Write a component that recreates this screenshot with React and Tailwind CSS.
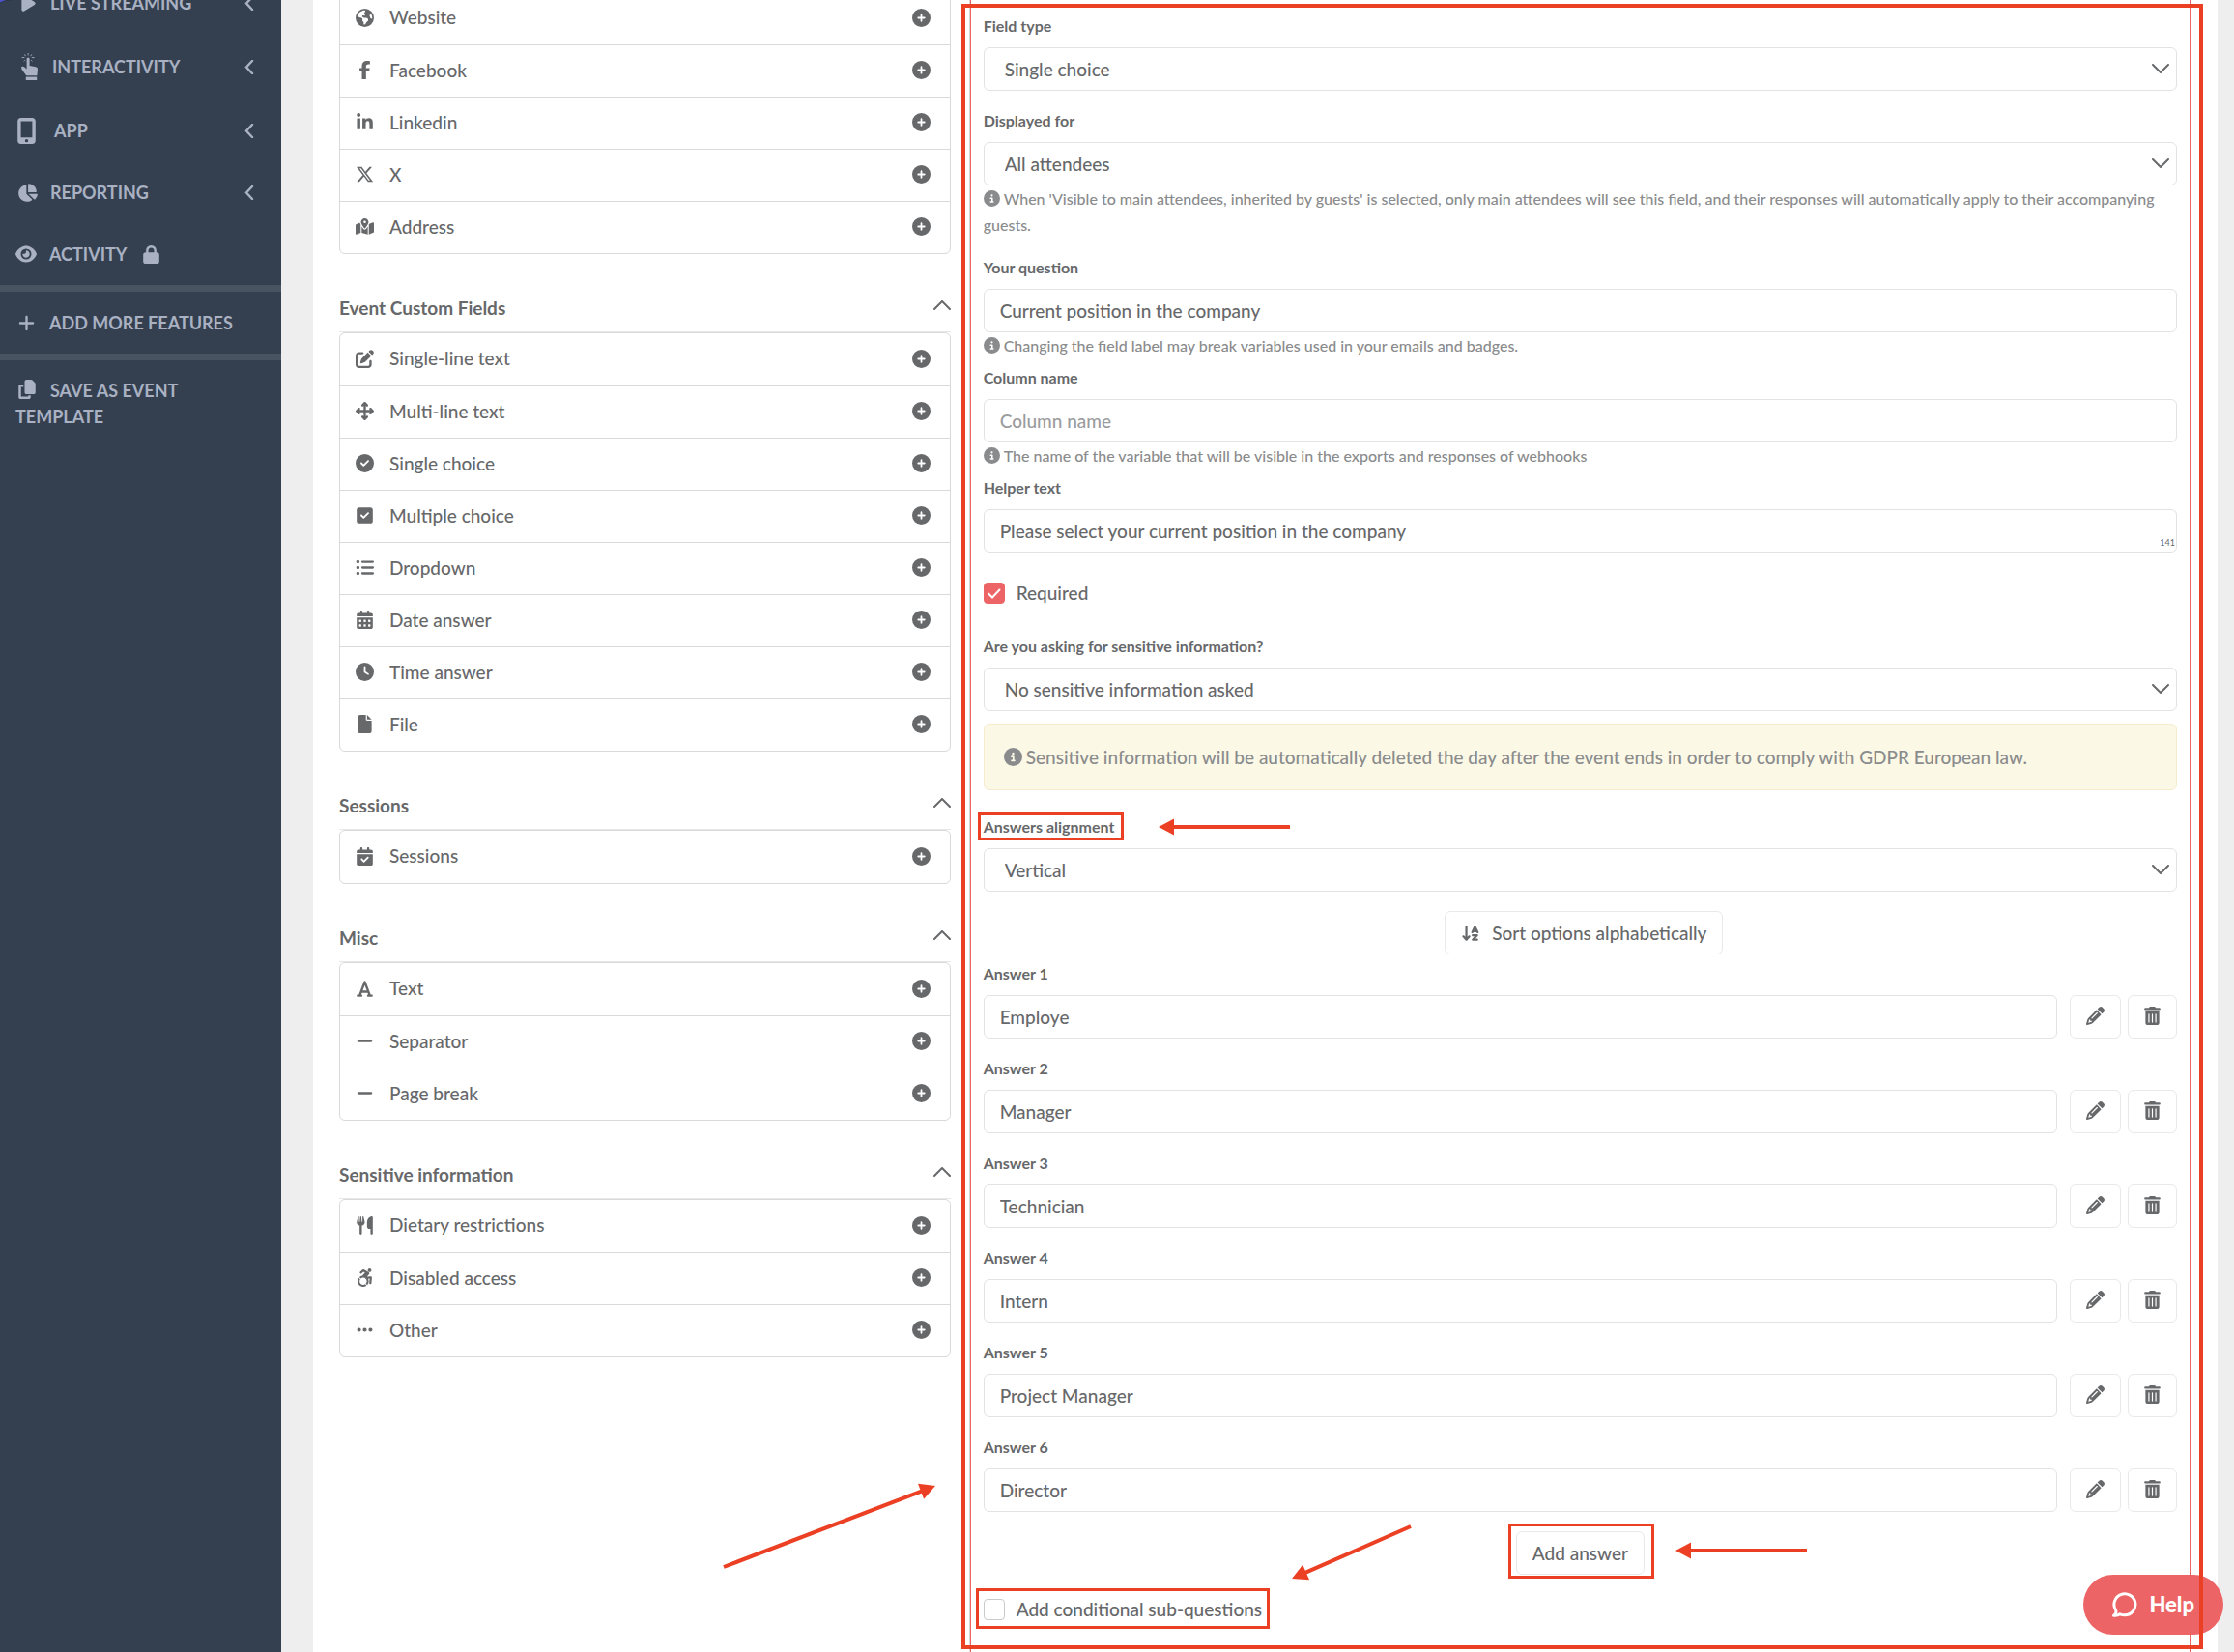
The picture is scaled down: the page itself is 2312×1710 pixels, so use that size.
import React, { useState } from "react";
import {
  FaPlay,
  FaMobileScreenButton,
  FaChartPie,
  FaEye,
  FaLock,
  FaPlus,
  FaCopy,
  FaEarthAmericas,
  FaFacebookF,
  FaLinkedinIn,
  FaXTwitter,
  FaMapLocationDot,
  FaPenToSquare,
  FaArrowsUpDownLeftRight,
  FaCircleCheck,
  FaSquareCheck,
  FaListUl,
  FaCalendarDays,
  FaClock,
  FaFile,
  FaCalendarCheck,
  FaFont,
  FaMinus,
  FaUtensils,
  FaAccessibleIcon,
  FaEllipsis,
  FaCirclePlus,
  FaCircleInfo,
  FaArrowDownAZ,
  FaPencil,
  FaTrashCan,
} from "react-icons/fa6";

const fieldGroups = [
  {
    title: null,
    fields: [
      { name: "Website", icon: FaEarthAmericas },
      { name: "Facebook", icon: FaFacebookF },
      { name: "Linkedin", icon: FaLinkedinIn },
      { name: "X", icon: FaXTwitter },
      { name: "Address", icon: FaMapLocationDot },
    ],
  },
  {
    title: "Event Custom Fields",
    fields: [
      { name: "Single-line text", icon: FaPenToSquare },
      { name: "Multi-line text", icon: FaArrowsUpDownLeftRight },
      { name: "Single choice", icon: FaCircleCheck },
      { name: "Multiple choice", icon: FaSquareCheck },
      { name: "Dropdown", icon: FaListUl },
      { name: "Date answer", icon: FaCalendarDays },
      { name: "Time answer", icon: FaClock },
      { name: "File", icon: FaFile },
    ],
  },
  {
    title: "Sessions",
    fields: [{ name: "Sessions", icon: FaCalendarCheck }],
  },
  {
    title: "Misc",
    fields: [
      { name: "Text", icon: FaFont },
      { name: "Separator", icon: FaMinus },
      { name: "Page break", icon: FaMinus },
    ],
  },
  {
    title: "Sensitive information",
    fields: [
      { name: "Dietary restrictions", icon: FaUtensils },
      { name: "Disabled access", icon: FaAccessibleIcon },
      { name: "Other", icon: FaEllipsis },
    ],
  },
];

const TapIcon = () => (
  <svg width="18" height="28" viewBox="0 0 18 28" fill="currentColor" aria-hidden="true">
    <path d="M5.600 6a1.500 1.500 0 0 1 3 0v7l6.600 1.200a2.200 2.200 0 0 1 1.800 2.200l-.6 6.800H5.200L1 17.400c-.8-1.200-1.300-2.800-.5-3.400.9-.6 2-.2 2.900.6l2.200 2z" />
    <path d="M4.800 24.600h11.400V28H4.800z" />
    <path
      d="M7.100 0v2.400M3.400 1.400l1.200 1.800M10.800 1.400L9.600 3.200M.6 4.600h2.800M10.800 4.600h2.800M2.800 8.400L4 7.200M11.400 8.400l-1.200-1.200"
      stroke="currentColor"
      strokeWidth="0.900"
    />
  </svg>
);

const Chevron = ({ className }) => (
  <svg className={className} width="18" height="10" viewBox="0 0 18 10" fill="none" aria-hidden="true">
    <path d="M1 1l8 8 8-8" stroke="currentColor" strokeWidth="2" strokeLinecap="round" />
  </svg>
);

const Arrow = ({ from, to, className }) => {
  const width = Math.abs(to[0] - from[0]);
  const height = Math.abs(to[1] - from[1]);
  const angle = (Math.atan2(to[1] - from[1], to[0] - from[0]) * 180) / Math.PI;
  const length = Math.hypot(width, height);
  return (
    <svg
      className={className}
      width={Math.max(width, 1)}
      height={Math.max(height, 1)}
      overflow="visible"
      aria-hidden="true"
    >
      <g transform={`translate(${from[0]} ${from[1]}) rotate(${angle})`} fill="#ec4024">
        <rect x="0" y="-2" width={length - 12} height="4" />
        <path d={`M${length} 0l-16 -8.5v17z`} />
      </g>
    </svg>
  );
};

const NavItem = ({ icon, label, cell = "w-9", height = "h-16", arrow = true, locked }) => (
  <a href="#" className={`flex items-center pl-4 pr-7 ${height}`}>
    <span className={`flex shrink-0 items-center ${cell}`}>{icon}</span>
    <span>{label}</span>
    {locked && <FaLock size={19} className="ml-4" />}
    {arrow && (
      <svg className="ml-auto" width="10" height="15" viewBox="0 0 10 15" fill="none" aria-hidden="true">
        <path d="M8 1L2 7.500L8 14" stroke="currentColor" strokeWidth="2.400" strokeLinecap="round" />
      </svg>
    )}
  </a>
);

const Sidebar = () => (
  <nav className="relative w-[291px] shrink-0 overflow-hidden bg-[#344050] text-lg font-bold text-[#a9b1c2]">
    <svg className="absolute left-0 top-0" width="14" height="4" viewBox="0 0 14 4" aria-hidden="true">
      <path d="M0 0h14L5 1 0 3.500z" fill="#2b3442" />
      <path d="M0 0h6L0 2.500z" fill="#4f52c8" />
    </svg>
    <div className="-mt-[29px]">
      <NavItem icon={<FaPlay size={19} className="ml-1" />} label="LIVE STREAMING" />
      <NavItem icon={<span className="ml-1.5"><TapIcon /></span>} label="INTERACTIVITY" cell="w-[38px]" height="h-[68px]" />
      <NavItem icon={<FaMobileScreenButton size={27} className="-ml-0.5" />} label="APP" cell="w-10" />
      <NavItem icon={<FaChartPie size={21} className="ml-0.5" />} label="REPORTING" />
      <NavItem icon={<FaEye size={22} />} label="ACTIVITY" cell="w-[35px]" arrow={false} locked />
    </div>
    <div className="border-y-[7px] border-[#485461]">
      <NavItem icon={<FaPlus size={19} className="ml-0.5" />} label="ADD MORE FEATURES" cell="w-[35px]" arrow={false} />
    </div>
    <a href="#" className="block py-[18px] pl-4 pr-20 leading-[27px]">
      <FaCopy size={20} className="ml-0.5 mr-3.5 inline align-[-2px]" />
      SAVE AS EVENT TEMPLATE
    </a>
  </nav>
);

const FieldGroup = ({ title, fields }) => (
  <section>
    {title && (
      <div className="flex h-[81px] items-end justify-between border-b border-[#e6e7e8] pb-3">
        <h2 className="font-bold">{title}</h2>
        <button type="button" aria-label={`Collapse ${title}`} className="mb-2.5">
          <Chevron className="rotate-180" />
        </button>
      </div>
    )}
    <ul className="rounded-md border border-[#d8d9da]">
      {fields.map(({ name, icon: Icon }, i) => (
        <li
          key={name}
          className={`flex h-[54px] items-center pb-0.5 pl-4 pr-5 ${i > 0 ? "border-t border-[#d8d9da]" : ""}`}
        >
          <Icon size={19} className="mr-4 shrink-0" />
          <span className="font-medium">{name}</span>
          <button type="button" aria-label={`Add ${name}`} className="ml-auto">
            <FaCirclePlus size={19} />
          </button>
        </li>
      ))}
    </ul>
  </section>
);

const Hint = ({ children }) => (
  <p className="text-base font-medium leading-[27px] text-[#8a8b8c]">
    <FaCircleInfo size={17} className="mr-1 inline align-[-2px]" />
    {children}
  </p>
);

const Label = ({ htmlFor, children }) => (
  <label htmlFor={htmlFor} className="mb-2.5 block text-base font-bold leading-6">
    {children}
  </label>
);

const Select = ({ id, options }) => (
  <div className="relative">
    <select
      id={id}
      className="h-[45px] w-full appearance-none rounded-md border border-[#e2e3e4] bg-white px-[21px] font-medium"
    >
      {options.map((o) => (
        <option key={o}>{o}</option>
      ))}
    </select>
    <Chevron className="pointer-events-none absolute right-2 top-[17px]" />
  </div>
);

const inputClass =
  "h-[45px] w-full min-w-0 rounded-md border border-[#e2e3e4] bg-white px-4 font-medium placeholder:text-[#9b9c9d]";

const Checkbox = ({ id, label, checked, onChange }) => (
  <div className="flex h-6 items-center gap-3">
    <span className="relative flex">
      <input
        id={id}
        type="checkbox"
        checked={checked}
        onChange={onChange}
        className="size-[22px] appearance-none rounded-sm border border-[#c9cacb] bg-white checked:border-[#ec6465] checked:bg-[#ec6465]"
      />
      {checked && (
        <svg className="pointer-events-none absolute inset-0" width="22" height="22" viewBox="0 0 22 22" fill="none">
          <path d="M5 11.500l4 4L16.500 7.500" stroke="white" strokeWidth="2" strokeLinecap="round" />
        </svg>
      )}
    </span>
    <label htmlFor={id} className="font-medium">{label}</label>
  </div>
);

const QuestionForm = () => {
  const [question, setQuestion] = useState("Current position in the company");
  const [columnName, setColumnName] = useState("");
  const [helperText, setHelperText] = useState("Please select your current position in the company");
  const [required, setRequired] = useState(true);
  const [conditional, setConditional] = useState(false);
  const [answers, setAnswers] = useState([
    "Employe",
    "Manager",
    "Technician",
    "Intern",
    "Project Manager",
    "Director",
  ]);

  const updateAnswer = (index, value) => {
    setAnswers(answers.map((a, i) => (i === index ? value : a)));
  };

  return (
    <div className="relative min-w-0 border-x border-[#d8d9da]">
      <form className="h-full border-x border-[#ec6465] px-[13px] pb-8 pt-[15px]">
        <div className="mb-[19px]">
          <Label htmlFor="fieldType">Field type</Label>
          <Select id="fieldType" options={["Single choice", "Multiple choice"]} />
        </div>

        <div className="mb-[19px]">
          <Label htmlFor="displayedFor">Displayed for</Label>
          <Select id="displayedFor" options={["All attendees", "Main attendees"]} />
          <Hint>
            When 'Visible to main attendees, inherited by guests' is selected, only main attendees will see this field,
            and their responses will automatically apply to their accompanying guests.
          </Hint>
        </div>

        <div className="mb-2">
          <Label htmlFor="question">Your question</Label>
          <input
            id="question"
            type="text"
            className={inputClass}
            value={question}
            onChange={(e) => setQuestion(e.target.value)}
          />
          <Hint>Changing the field label may break variables used in your emails and badges.</Hint>
        </div>

        <div className="mb-2">
          <Label htmlFor="columnName">Column name</Label>
          <input
            id="columnName"
            type="text"
            placeholder="Column name"
            className={inputClass}
            value={columnName}
            onChange={(e) => setColumnName(e.target.value)}
          />
          <Hint>The name of the variable that will be visible in the exports and responses of webhooks</Hint>
        </div>

        <div className="mb-[30px]">
          <Label htmlFor="helperText">Helper text</Label>
          <div className="relative flex">
            <input
              id="helperText"
              type="text"
              className={inputClass}
              value={helperText}
              onChange={(e) => setHelperText(e.target.value)}
            />
            <span className="absolute bottom-1 right-0.5 text-[9px] leading-3">141</span>
          </div>
        </div>

        <Checkbox id="required" label="Required" checked={required} onChange={(e) => setRequired(e.target.checked)} />

        <div className="mb-[13px] mt-[31px]">
          <Label htmlFor="sensitive">Are you asking for sensitive information?</Label>
          <Select id="sensitive" options={["No sensitive information asked", "Sensitive information asked"]} />
        </div>

        <div className="mb-[26px] flex h-[69px] items-center gap-1 rounded-md border border-[#f5ecce] bg-[#fbf8e6] px-5 font-medium text-[#8a8b8c]">
          <FaCircleInfo size={19} className="shrink-0" />
          <span>
            Sensitive information will be automatically deleted the day after the event ends in order to comply with
            GDPR European law.
          </span>
        </div>

        <div className="mb-5">
          <div className="relative w-fit">
            <Label htmlFor="alignment">Answers alignment</Label>
            <span className="pointer-events-none absolute -bottom-0.5 -left-1.5 -right-2.5 -top-[3px] border-3 border-[#ec4024]"></span>
            <Arrow from={[136, 0]} to={[0, 0]} className="absolute left-[181px] top-3" />
          </div>
          <Select id="alignment" options={["Vertical", "Horizontal"]} />
        </div>

        <div className="mb-2 flex justify-center pl-2">
          <button
            type="button"
            onClick={() => setAnswers([...answers].sort())}
            className="flex h-[45px] items-center gap-3 rounded-md border border-[#e8e9ea] px-4 font-medium"
          >
            <FaArrowDownAZ size={20} />
            Sort options alphabetically
          </button>
        </div>

        <div className="flex flex-col gap-[19px]">
          {answers.map((answer, i) => (
            <div key={i}>
              <Label htmlFor={`answer${i}`}>Answer {i + 1}</Label>
              <div className="flex">
                <input
                  id={`answer${i}`}
                  type="text"
                  className={inputClass}
                  value={answer}
                  onChange={(e) => updateAnswer(i, e.target.value)}
                />
                <button
                  type="button"
                  aria-label="Edit answer"
                  className="ml-[13px] flex w-[53px] shrink-0 justify-center rounded-md border border-[#e8e9ea] pt-[11px]"
                >
                  <FaPencil size={19} />
                </button>
                <button
                  type="button"
                  aria-label="Delete answer"
                  className="ml-[7px] flex w-[51px] shrink-0 justify-center rounded-md border border-[#e8e9ea] pt-[11px]"
                  onClick={() => setAnswers(answers.filter((_, j) => j !== i))}
                >
                  <FaTrashCan size={19} />
                </button>
              </div>
            </div>
          ))}
        </div>

        <div className="mb-6 mt-5 flex justify-center">
          <div className="relative">
            <button
              type="button"
              onClick={() => setAnswers([...answers, ""])}
              className="h-[45px] rounded-md border border-[#e8e9ea] px-4 font-medium"
            >
              Add answer
            </button>
            <span className="pointer-events-none absolute -bottom-1 -left-2 -right-2.5 -top-2 border-3 border-[#ec4024]"></span>
            <Arrow from={[136, 0]} to={[0, 0]} className="absolute left-[165px] top-5" />
          </div>
        </div>

        <div className="relative w-fit">
          <Checkbox
            id="conditional"
            label="Add conditional sub-questions"
            checked={conditional}
            onChange={(e) => setConditional(e.target.checked)}
          />
          <span className="pointer-events-none absolute -bottom-2 -left-2 -right-2 -top-2.5 border-3 border-[#ec4024]"></span>
          <Arrow from={[123, 0]} to={[0, 54]} className="absolute bottom-11 left-[319px]" />
        </div>
      </form>

      <span className="pointer-events-none absolute -left-[9px] -right-[13px] bottom-[3px] top-1 z-20 border-4 border-[#ec4024]"></span>
      <Arrow from={[0, 84]} to={[219, 0]} className="absolute bottom-[88px] -left-[255px]" />
    </div>
  );
};

const App = () => {
  return (
    <div className="flex min-h-screen overflow-hidden bg-[#eeeeee] font-['Lato',sans-serif] text-[19px] leading-6 text-[#67686a]">
      <Sidebar />
      <main className="ml-[33px] mr-[17px] grid min-w-0 flex-1 grid-cols-[1fr_2fr] gap-[19px] bg-white px-[27px]">
        <div className="-mt-[9px] min-w-0">
          {fieldGroups.map((group, i) => (
            <FieldGroup key={i} title={group.title} fields={group.fields} />
          ))}
        </div>
        <QuestionForm />
      </main>

      <button
        type="button"
        className="fixed bottom-[18px] right-[11px] z-10 flex h-[62px] items-center gap-3 rounded-full bg-[#ec6465] pl-7 pr-[30px] text-[22px] font-black text-white"
      >
        <svg width="28" height="28" viewBox="0 0 28 28" fill="none" aria-hidden="true">
          <path
            d="M3.500 25.200c2-1.200 2.800-3.200 2.200-5.400A11 11 0 1 1 15 24.800c-2.200 0-3.600-.4-5-1-1.800 1.200-4 1.700-6.500 1.400z"
            stroke="currentColor"
            strokeWidth="3"
            strokeLinejoin="round"
          />
        </svg>
        Help
      </button>
    </div>
  );
};

export default App;
